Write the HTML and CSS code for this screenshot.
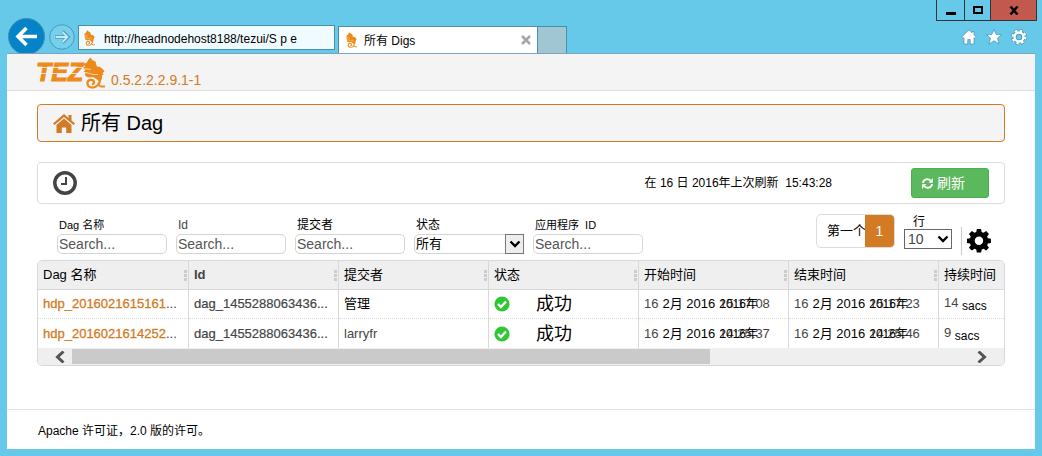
FILE: index.html
```html
<!DOCTYPE html>
<html lang="zh-CN">
<head>
<meta charset="utf-8">
<title>所有 Dag</title>
<link rel="stylesheet" href="styles.css">
</head>
<body>
<svg class="defs" aria-hidden="true">
  <symbol id="chameleon" viewBox="0 0 22 32">
    <path d="M7.500.5C8.500 3 10.500 4 12.500 4.500C13.500 6.500 13 8 14 9.500C17 9.500 19.500 11 21.500 14.500L19.500 16L20.500 17.500L19 18.500C19.500 21 18.500 23.500 16.500 25L14 22.500L10 20L6 20.500L3 19.500L1.500 17L3.500 16L.5 14.500L2.500 13L0 11L2 9.500L.5 7L4 5.500C4.500 3 6 2 7.500.5Z" fill="currentColor"/>
    <path d="M17 21C17.500 28 12.500 31 8.500 30.500C3.500 30 3 23.500 7.500 22.800C12 22.500 12 27.500 8.800 27.200" fill="none" stroke="currentColor" stroke-width="2.200"/>
    <path d="M14.500 27.500L18 29.500L22 29.500" fill="none" stroke="currentColor" stroke-width="1.800"/>
    <path d="M1.500 11.500L8 12.500M3 15.500L10 17.500L15 17.500" fill="none" stroke="#f4f4f4" stroke-width=".7"/>
  </symbol>
  <symbol id="gear" viewBox="0 0 24 24">
    <path fill-rule="evenodd" fill="currentColor" d="M9.700 0h4.600l.6 3.300 2.100.9L19.900 2.200l3 3.100-2 2.800.8 1.900 3.300.6v4.500l-3.300.6-.8 2 2 2.800-3.100 3-2.800-2-2 .8-.6 3.300H9.700l-.6-3.300-2-.8-2.800 2-3.200-3 2-2.800-.8-2L-1 15.100v-4.500l3.300-.6.8-1.900-2-2.800 3.200-3.100 2.800 2 2-.9zM12 8.200a4.600 4.600 0 1 0 0 9.200 4.600 4.600 0 0 0 0-9.200z" transform="translate(.9 0) scale(.92)"/>
  </symbol>
  <symbol id="house" viewBox="0 0 22 20">
    <path fill="currentColor" d="M11 1 0 10.500l1.500 1.600L11 4l9.500 8.100 1.500-1.600-3.500-3V2h-3v2.900zM11 5.500 3.500 12v8h5.300v-5.500h4.400V20h5.300v-8z"/>
  </symbol>
  <symbol id="check" viewBox="0 0 16 16">
    <circle cx="8" cy="8" r="7.600" fill="#2fc832"/>
    <path d="m4 8 2.900 3L12 5.500" fill="none" stroke="#fff" stroke-width="2.400"/>
  </symbol>
  <symbol id="caret" viewBox="0 0 12 8">
    <path d="m1.500 1.500 4.500 4.500 4.500-4.500" fill="none" stroke="currentColor" stroke-width="2.400"/>
  </symbol>
</svg>

<header class="chrome">
  <nav class="chrome-nav">
    <button class="back" type="button" aria-label="后退">
      <svg width="37" height="37" viewBox="0 0 37 37"><circle cx="18.500" cy="18.500" r="18" fill="#0583c8" stroke="#3d8fb0"/><path d="M29 18.500H11M18.500 10 10 18.500l8.500 8.500" fill="none" stroke="#fff" stroke-width="3.600"/></svg>
    </button>
    <button class="forward" type="button" aria-label="前进">
      <svg width="26" height="26" viewBox="0 0 26 26"><circle cx="13" cy="13" r="12.300" fill="#76cfeb" stroke="#4a9ab4"/><path d="M6 13h12M13.500 7.500l5.500 5.500-5.500 5.500" fill="none" stroke="#4a9ab4" stroke-width="3.400"/><path d="M6.500 13h11.500M13.500 8l5 5-5 5" fill="none" stroke="#c4ecf8" stroke-width="1.800"/></svg>
    </button>
    <label class="address">
      <svg class="favicon"><use href="#chameleon"/></svg>
      <input type="text" aria-label="地址" value="http://headnodehost8188/tezui/S p e">
    </label>
    <div class="tab">
      <svg class="favicon"><use href="#chameleon"/></svg>
      <span class="tab-title">所有 Digs</span>
      <button class="tab-close" type="button" aria-label="关闭标签页"><svg width="10" height="10" viewBox="0 0 10 10"><path d="m1 1 8 8M9 1 1 9" stroke="#a6a6a6" stroke-width="2.500"/></svg></button>
    </div>
    <button class="new-tab" type="button" aria-label="新标签页"></button>
  </nav>
  <div class="chrome-side">
    <div class="window-buttons">
      <button type="button" class="min" aria-label="最小化"><svg width="10" height="10"><path d="M0 7h10v3H0z"/></svg></button>
      <button type="button" class="max" aria-label="最大化"><svg width="10" height="9"><path d="M1 1h8v6H1z" fill="none" stroke="#000" stroke-width="2"/></svg></button>
      <button type="button" class="close" aria-label="关闭"><svg width="10" height="9"><path d="m1.500.5 7 8m0-8-7 8" stroke="#000" stroke-width="2.500"/></svg></button>
    </div>
    <div class="tools">
      <button type="button" aria-label="主页"><svg width="16" height="16" viewBox="0 0 16 16"><path d="M8 .8.8 8l1.300 1.500.9-.8V15h3.800v-4.500h2.400V15H13V8.700l.9.800L15.200 8l-2.200-2.200V2.500h-2V3.800z" fill="#fff" stroke="#4a8ea8" stroke-width=".7"/></svg></button>
      <button type="button" aria-label="收藏夹"><svg width="16" height="16" viewBox="0 0 16 16"><path d="m8 .4 2.200 5.200h5.400l-4.200 3.600 1.700 5.900L8 11.700l-5.100 3.400 1.700-5.900L.4 5.600h5.400z" fill="#fff" stroke="#4a8ea8" stroke-width=".7"/></svg></button>
      <button type="button" aria-label="工具"><svg width="16" height="16" viewBox="0 0 16 16"><g fill="none" stroke="#4a8ea8"><circle cx="8" cy="8" r="6.200" stroke-width="3.600" stroke-dasharray="2.870 2"/><circle cx="8" cy="8" r="4.500" stroke-width="4"/></g><g fill="none" stroke="#fff"><circle cx="8" cy="8" r="6.200" stroke-width="2.400" stroke-dasharray="2.400 2.470"/><circle cx="8" cy="8" r="4.500" stroke-width="2.400"/></g></svg></button>
    </div>
  </div>
</header>

<div class="page">
  <header class="brand">
    <svg class="logo" width="70" height="34" viewBox="0 0 70 34" role="img" aria-label="TEZ">
      <text class="logo-text" x="-1" y="25">TEZ</text>
      <path d="M0 11.500h46M0 17.500h46" stroke="#f4f4f4" stroke-width=".8"/>
      <use class="logo-mark" href="#chameleon" x="46" y="1" width="22" height="32"/>
    </svg>
    <span class="version">0.5.2.2.2.9.1-1</span>
  </header>

  <main>
    <h1 class="title"><svg width="22" height="20"><use href="#house"/></svg><span>所有 Dag</span></h1>

    <section class="refresh">
      <svg width="24" height="24" viewBox="0 0 24 24"><circle cx="12" cy="12" r="10.200" fill="none" stroke="#444" stroke-width="3.500"/><path d="M13 6v7H8" fill="none" stroke="#444" stroke-width="2"/></svg>
      <span class="refreshed">在 16 日 2016年上次刷新&nbsp; 15:43:28</span>
      <button class="refresh-button" type="button"><svg width="11" height="11" viewBox="0 0 11 11"><path d="M1 5C1.300 1 6.500 0 9 3M10 6C9.700 10 4.500 11 2 8" fill="none" stroke="#fff" stroke-width="1.900"/><path d="M11 0v4.800H6.500zM0 11V6.200h4.500z" fill="#fff"/></svg>刷新</button>
    </section>

    <section class="filters">
      <div class="field"><label class="small" for="f-name">Dag 名称</label><input id="f-name" type="text" placeholder="Search..."></div>
      <div class="field"><label for="f-id" class="muted">Id</label><input id="f-id" type="text" placeholder="Search..."></div>
      <div class="field"><label for="f-user">提交者</label><input id="f-user" type="text" placeholder="Search..."></div>
      <div class="field"><label for="f-status">状态</label>
        <div class="picker"><select id="f-status"><option>所有</option></select><span class="arrow"><svg width="12" height="8"><use href="#caret"/></svg></span></div>
      </div>
      <div class="field"><label class="small" for="f-app">应用程序&nbsp; ID</label><input id="f-app" type="text" placeholder="Search..."></div>
      <div class="paging">
        <div class="pager"><button type="button" class="first">第一个</button><button type="button" class="current">1</button></div>
        <div class="rows"><label for="rows">行</label>
          <div class="picker"><select id="rows"><option>10</option></select><span class="arrow"><svg width="12" height="8"><use href="#caret"/></svg></span></div>
        </div>
        <button class="settings" type="button" aria-label="设置"><svg width="24" height="24"><use href="#gear"/></svg></button>
      </div>
    </section>

    <div class="grid">
      <table>
        <colgroup><col class="col"><col class="col"><col class="col"><col class="col"><col class="col"><col class="col"><col></colgroup>
        <thead>
          <tr><th><div>Dag 名称<i></i></div></th><th><div><b>Id</b><i></i></div></th><th><div>提交者<i></i></div></th><th><div>状态<i></i></div></th><th><div>开始时间<i></i></div></th><th><div>结束时间<i></i></div></th><th><div>持续时间</div></th></tr>
        </thead>
        <tbody>
          <tr>
            <td><a href="#">hdp_2016021615161</a>...</td>
            <td class="id">dag_1455288063436...</td>
            <td class="ink">管理</td>
            <td><div class="status"><svg width="16" height="16"><use href="#check"/></svg><span>成功</span></div></td>
            <td><div class="date"><span>16</span><span class="ink">2月 2016</span><span class="time">15:17:08<span class="year">2016年</span></span></div></td>
            <td><div class="date"><span>16</span><span class="ink">2月 2016</span><span class="time">15:17:23<span class="year">2016年</span></span></div></td>
            <td>14 <span class="unit">sacs</span></td>
          </tr>
          <tr>
            <td><a href="#">hdp_2016021614252</a>...</td>
            <td class="id">dag_1455288063436...</td>
            <td>larryfr</td>
            <td><div class="status"><svg width="16" height="16"><use href="#check"/></svg><span>成功</span></div></td>
            <td><div class="date"><span>16</span><span class="ink">2月 2016</span><span class="time">14:25:37<span class="year">2016年</span></span></div></td>
            <td><div class="date"><span>16</span><span class="ink">2月 2016</span><span class="time">14:25:46<span class="year">2016年</span></span></div></td>
            <td>9 <span class="unit">sacs</span></td>
          </tr>
        </tbody>
      </table>
      <div class="scroll">
        <button type="button" aria-label="向左滚动"><svg width="10" height="12" viewBox="0 0 10 12"><path d="M8.500.5 2.500 6l6 5.500" fill="none" stroke="#555" stroke-width="3"/></svg></button>
        <div class="track"><div class="thumb"></div></div>
        <button type="button" aria-label="向右滚动"><svg width="10" height="12" viewBox="0 0 10 12"><path d="m1.500.5 6 5.500-6 5.500" fill="none" stroke="#555" stroke-width="3"/></svg></button>
      </div>
    </div>
  </main>

  <footer class="footer">Apache 许可证，2.0 版的许可。</footer>
</div>
</body>
</html>
```
FILE: styles.css
```css
* { box-sizing: border-box; }

body {
  margin: 0;
  min-height: 100vh;
  display: flex;
  flex-direction: column;
  background: #66c9ea;
  color: #000;
  font: 12px/16px "Liberation Sans", "Noto Sans CJK SC", sans-serif;
}

button, input, select { font: inherit; color: inherit; }
button { padding: 0; border: 0; background: none; }
svg { display: block; flex: none; }
.defs { position: absolute; width: 0; height: 0; }

/* Browser frame */
.chrome { display: flex; justify-content: space-between; height: 53px; }
.chrome-nav { display: flex; align-items: flex-end; padding-left: 8px; overflow: hidden; }
.back { height: 35px; }
.forward { margin: 0 3px 3px 4px; }
.address, .tab {
  display: flex;
  align-items: center;
  border: 1px solid #4a8ea8;
}
.address { width: 257px; height: 25px; margin: 0 3px 3px 0; background: #f0fbff; }
.address input { flex: 1; min-width: 0; border: 0; padding: 2px 0 0; background: none; outline: 0; }
.favicon { width: 11px; height: 16px; margin: 0 9px 0 5px; color: #ee8a1a; }
.tab .favicon { margin: 0 7px; }
.tab { width: 200px; height: 27px; border-bottom: 0; background: #fff; }
.tab-title { flex: 1; padding-top: 2px; }
.tab-close { padding: 0 6px; }
.new-tab { width: 29px; height: 27px; border: 1px solid #4a8ea8; border-width: 1px 1px 0 0; background: #a0c6d4; }
.chrome-side { display: flex; flex-direction: column; align-items: flex-end; gap: 8px; padding-right: 5px; }
.window-buttons { display: flex; border: 1px solid #333; border-top: 0; }
.window-buttons button { display: grid; place-items: center; width: 28px; height: 20px; border-right: 1px solid #333; }
.window-buttons .max { width: 26px; }
.window-buttons .close { width: 45px; border: 0; background: #c1594f; }
.tools { display: flex; gap: 9px; padding-right: 10px; }

/* Page */
.page {
  flex: 1;
  display: flex;
  flex-direction: column;
  margin: 0 7px 7px;
  border-top: 1px solid #7da3bd;
  background: #fff;
}
.brand {
  display: flex;
  align-items: flex-end;
  gap: 4px;
  height: 37px;
  padding: 0 30px;
  border-bottom: 1px solid #dedede;
  background: #f4f4f4;
}
.logo-text { font: italic bold 25px "Liberation Sans", sans-serif; fill: #ee8a1a; stroke: #ee8a1a; stroke-width: 1px; }
.logo-mark { color: #ee8a1a; }
.version { padding-bottom: 2px; color: #d27a24; font-size: 14px; }
main { flex: 1; padding: 13px 30px 0; }

.title {
  display: flex;
  align-items: center;
  gap: 6px;
  margin: 0 0 20px;
  padding: 0 15px;
  height: 38px;
  border: 1px solid #d27a24;
  border-radius: 4px;
  background: #f4f4f4;
  font-size: 20px;
  font-weight: normal;
}
.title svg { color: #d27a24; }

.refresh {
  display: flex;
  align-items: center;
  height: 42px;
  padding: 0 15px;
  border: 1px solid #dcdcdc;
  border-radius: 4px;
}
.refreshed { margin: 0 79px 0 auto; }
.refresh-button {
  display: flex;
  align-items: center;
  gap: 4px;
  width: 78px;
  height: 30px;
  padding: 0 10px;
  border: 1px solid #4cae4c;
  border-radius: 3px;
  background: #5cb85c;
  color: #fff;
  font-size: 14px;
}

.filters { display: flex; align-items: flex-start; gap: 9px; padding: 10px 14px 5px 20px; }
.field { width: 110px; padding-top: 3px; }
.field label { display: block; height: 17px; padding-left: 2px; }
.field .small { font-size: 11px; }
.field .muted { color: #444; }
.field input, .field select {
  width: 100%;
  height: 20px;
  padding: 0 1px;
  border: 1px solid #d4d4d4;
  border-radius: 5px;
  background: #fff;
  font-size: 14px;
}
.field select { font-size: 13px; }
input::placeholder { color: #555; opacity: 1; }
.picker { position: relative; }
select { appearance: none; outline: 0; }
.arrow { position: absolute; top: 0; right: 0; display: grid; place-items: center; height: 20px; width: 19px; pointer-events: none; }
.field .arrow { border: 1px solid #777; background: #eee; }

.paging { display: flex; margin-left: auto; }
.pager { display: flex; height: 34px; border: 1px solid #dcdcdc; border-radius: 5px; overflow: hidden; }
.first { width: 48px; padding-left: 10px; font-size: 13px; white-space: nowrap; }
.current { width: 29px; background: #d27a24; color: #fff; font-size: 14px; }
.rows { width: 48px; margin-left: 9px; }
.rows label { display: block; height: 15px; padding-left: 9px; }
.rows select { width: 100%; height: 20px; padding: 0 3px; border: 1px solid #666; background: #fff; color: #444; font-size: 14px; }
.settings { height: 28px; margin: 13px 0 0 9px; padding-left: 5px; border-left: 1px solid #ccc; }

/* Results */
.grid { border: 1px solid #d8d8d8; border-radius: 5px; overflow: hidden; }
table { width: 100%; border-collapse: separate; border-spacing: 0; table-layout: fixed; color: #444; font-size: 13px; }
.col { width: 150px; }
.col:first-child { width: 151px; }
th, td { height: 29px; padding: 0 5px; border-right: 1px solid #d8d8d8; text-align: left; white-space: nowrap; overflow: hidden; }
th:last-child, td:last-child { border-right: 0; }
th { padding-right: 1px; border-bottom: 1px solid #d8d8d8; background: #efefef; color: #000; font-weight: normal; }
th div { display: flex; justify-content: space-between; align-items: center; }
th b { color: #444; }
th i { width: 3px; height: 11px; background: repeating-linear-gradient(#ccc 0 3px, #efefef 3px 4px); }
tbody tr:first-child td { border-bottom: 1px dotted #d8d8d8; }
td a { color: #d27a24; text-decoration: none; -webkit-text-stroke: 0.3px; }
.id { -webkit-text-stroke: 0.2px; }
.ink { color: #000; }
.status { display: flex; align-items: center; gap: 26px; color: #000; font-size: 18px; line-height: 24px; }
.date { display: flex; gap: 4px; }
.time { position: relative; }
.year { position: absolute; left: 0; top: 0; color: #000; font-size: 12px; }
.unit { display: inline-block; padding-top: 4px; color: #000; font-size: 12px; vertical-align: middle; }

.scroll { display: flex; align-items: center; height: 17px; background: #efefef; }
.scroll button { display: grid; place-items: center; width: 34px; padding-left: 9px; }
.scroll button:last-child { padding: 0 10px 0 0; }
.track { flex: 1; }
.thumb { width: 71%; height: 15px; background: #cacaca; }

.footer { height: 40px; padding: 13px 31px; border-top: 1px solid #e2e2e2; }
```
